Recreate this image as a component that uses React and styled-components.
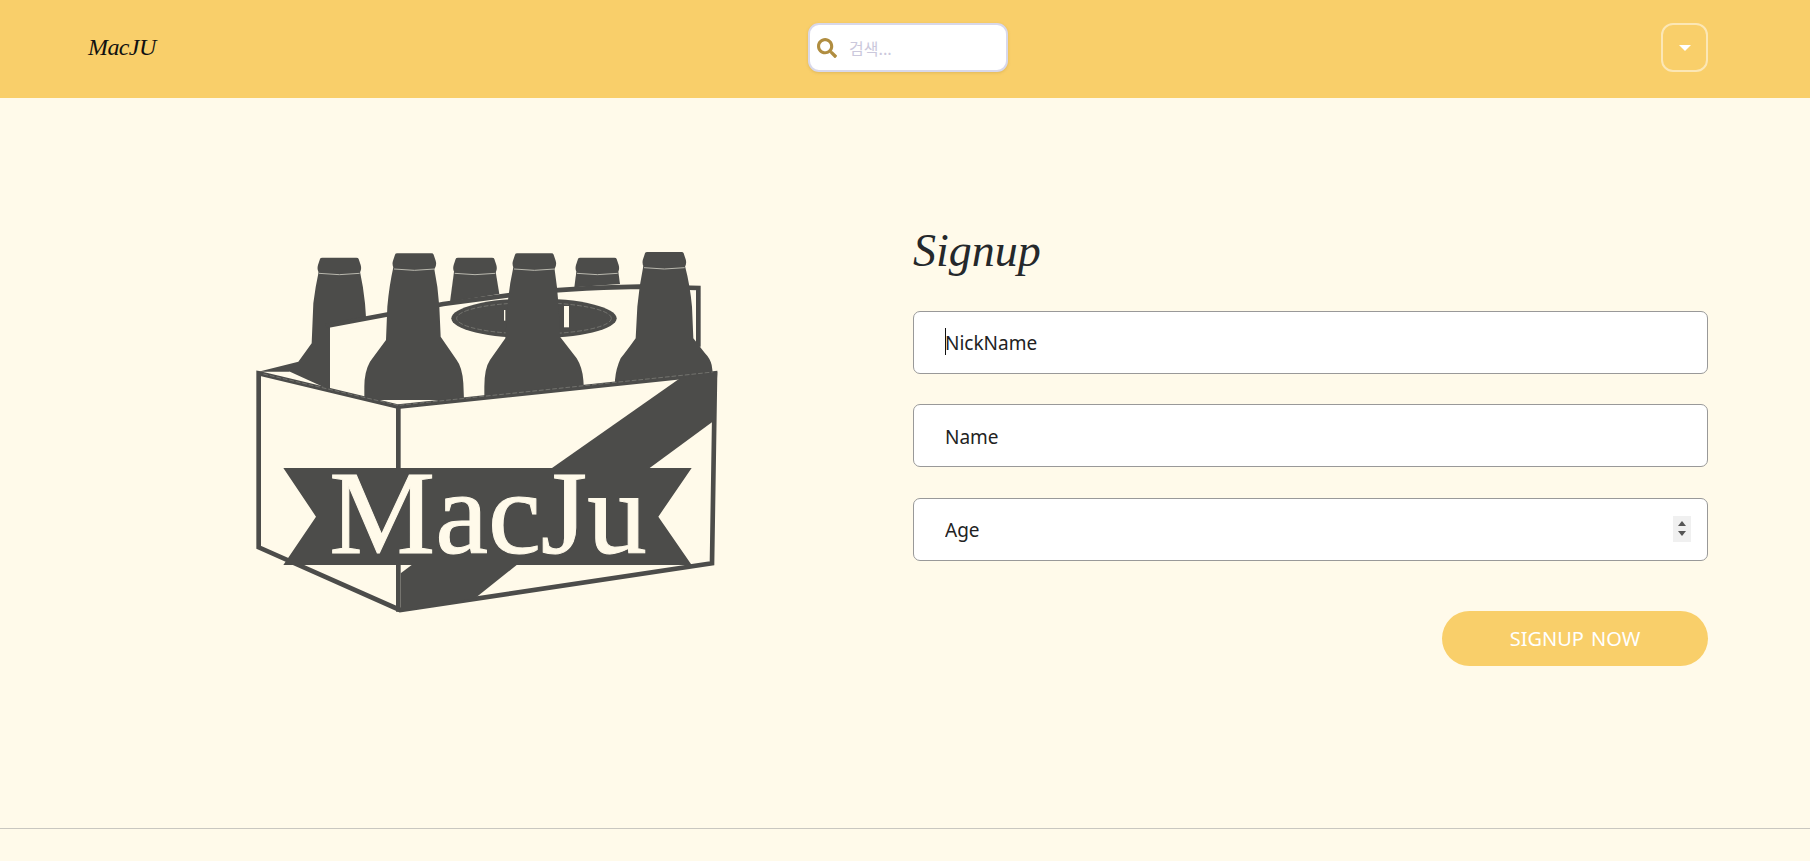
import React from 'react';
import styled, { createGlobalStyle } from 'styled-components';
import { FaSearch } from 'react-icons/fa';

const GlobalStyle = createGlobalStyle`
  html, body {
    margin: 0;
    height: 100%;
    background: #fffaea;
    overflow: hidden;
  }
  * {
    box-sizing: border-box;
  }
`;

const Page = styled.div`
  width: 1810px;
  height: 861px;
  display: flex;
  flex-direction: column;
  background: #fffaea;
  font-family: "Noto Sans", "Noto Sans CJK KR", sans-serif;
`;

const Navbar = styled.header`
  height: 98px;
  flex: none;
  display: grid;
  grid-template-columns: 720px 200px 1fr;
  align-items: center;
  padding: 0 102px 3px 88px;
  background: #f9cf6a;
`;

const Brand = styled.a`
  font-family: "Liberation Serif", serif;
  font-style: italic;
  font-size: 24px;
  letter-spacing: -0.6px;
  color: #111;
`;

const SearchBox = styled.label`
  height: 49px;
  display: flex;
  align-items: center;
  gap: 12px;
  padding-left: 7px;
  background: #fff;
  border: 2px solid #d8d8ea;
  border-radius: 11px;
  box-shadow: 0 1px 3px rgba(150, 120, 50, 0.25);
`;

const SearchIcon = styled(FaSearch)`
  width: 20px;
  height: 20px;
  flex: none;
  color: #b08d40;
`;

const SearchInput = styled.input`
  width: 130px;
  border: 0;
  outline: 0;
  padding: 0;
  background: transparent;
  font: 16px "Noto Sans CJK KR", "Noto Sans", sans-serif;

  &::placeholder {
    color: #cbc8dc;
    opacity: 1;
  }
`;

const MenuButton = styled.button`
  justify-self: end;
  width: 47px;
  height: 49px;
  display: flex;
  align-items: center;
  justify-content: center;
  padding: 0;
  background: transparent;
  border: 2px solid rgba(255, 255, 255, 0.5);
  border-radius: 12px;
`;

const MenuCaret = styled.span`
  width: 0;
  height: 0;
  border-left: 6px solid transparent;
  border-right: 6px solid transparent;
  border-top: 6px solid #fff;
`;

const Main = styled.main`
  flex: 1;
  display: grid;
  grid-template-columns: 774px 1fr;
  column-gap: 36px;
  padding: 0 102px 0 103px;
`;

const LogoColumn = styled.div`
  display: flex;
  justify-content: center;
  padding-top: 132px;
`;

const FormColumn = styled.form`
  display: flex;
  flex-direction: column;
  padding-top: 120px;
`;

const Title = styled.h1`
  margin: 0 0 27.7px;
  height: 65px;
  line-height: 65px;
  font-family: "Liberation Serif", serif;
  font-style: italic;
  font-weight: 400;
  font-size: 46px;
  color: #25282b;
`;

const Field = styled.div`
  position: relative;
  height: 63px;
  margin-bottom: 30.5px;
`;

const TextInput = styled.input`
  width: 100%;
  height: 100%;
  padding: 2px 31px 0;
  background: #fff;
  border: 1px solid #999;
  border-radius: 7px;
  outline: 0;
  font: 19px "Noto Sans", sans-serif;
  color: #222;

  &::placeholder {
    color: #222;
    opacity: 1;
  }
`;

const Caret = styled.span`
  position: absolute;
  left: 32px;
  top: 17px;
  width: 1px;
  height: 27px;
  background: #111;
`;

const Spinner = styled.span`
  position: absolute;
  right: 17px;
  top: 18px;
  width: 18px;
  height: 26px;
  display: flex;
  flex-direction: column;
  align-items: center;
  justify-content: center;
  gap: 5px;
  background: #f0f0f0;
`;

const SpinArrow = styled.span`
  width: 0;
  height: 0;
  border-left: 4px solid transparent;
  border-right: 4px solid transparent;
  border-${(p) => (p.$down ? 'top' : 'bottom')}: 5px solid #555;
`;

const Actions = styled.div`
  display: flex;
  justify-content: flex-end;
  margin-top: 20px;
`;

const SubmitButton = styled.button`
  width: 266px;
  height: 55px;
  border: 0;
  border-radius: 28px;
  background: #f9cf6a;
  color: #fff;
  font: 20px "Noto Sans", sans-serif;
  word-spacing: 2px;
`;

const Footer = styled.footer`
  height: 33px;
  flex: none;
  border-top: 1px solid #c9c7c0;
`;

const INK = '#4c4c4a';
const CREAM = '#fffaea';
const DASH = '#85857f';

const caps = [
  [263, 83],
  [670, 83],
  [1037, 83],
  [488, 70],
  [848, 70],
  [1238, 66],
];

const BottleCap = ({ x, y }) => (
  <g transform={`translate(${x} ${y})`}>
    <path
      fill={INK}
      d="M4 46 Q-3 35 1 22 L7 4 Q8 0 14 0 L116 0 Q122 0 123 4 L129 22 Q133 35 126 46 Q65 54 4 46 Z"
    />
    <path fill="none" stroke="#b9b8ae" strokeWidth="3" d="M4 47 Q65 55 126 47" />
  </g>
);

const BeerCrateLogo = () => (
  <svg width="520" height="400" viewBox="0 0 1560 1200">
    {/* bottles standing behind the carrier panel */}
    <path
      fill={INK}
      d="M266 125 Q256 170 250 220 L245 340 L205 395 L85 425 L180 425 L300 480 L300 290 L408 262 L405 220 Q400 170 390 125 Z"
    />
    <path fill={INK} d="M672 125 L660 215 L808 192 L797 125 Z" />
    <path fill={INK} d="M1039 125 L1033 172 L1170 162 L1165 125 Z" />
    <path fill={CREAM} d="M150 432 L180 425 L178 437 Z" />

    {/* carrier panel and handle */}
    <path
      fill="none"
      stroke={INK}
      strokeWidth="14"
      d="M288 288 L640 222 L850 194 Q1000 174 1230 170 L1405 174 L1405 350"
    />
    <ellipse cx="912" cy="265" rx="248" ry="60" fill={INK} />
    <ellipse cx="912" cy="265" rx="232" ry="47" fill="none" stroke={DASH} strokeWidth="2" strokeDasharray="14 6" />
    <rect x="1002" y="228" width="15" height="64" fill={CREAM} />
    <rect x="822" y="240" width="4" height="32" fill={CREAM} />

    {/* front bottles */}
    <path
      fill={INK}
      d="M490 112 Q478 165 472 230 L468 330 Q440 368 420 395 Q403 425 403 470 L403 510 L702 510 L700 460 Q697 412 680 390 L632 320 L628 230 Q624 170 612 112 Z"
    />
    <path
      fill={INK}
      d="M850 112 Q838 165 832 230 L826 325 Q800 362 780 390 Q763 415 763 470 L763 510 L1062 480 L1060 450 Q1057 412 1040 385 L990 320 L986 230 Q982 170 973 112 Z"
    />
    <path
      fill={INK}
      d="M1240 108 Q1228 165 1222 230 L1217 325 Q1192 360 1172 385 Q1158 415 1155 450 L1155 470 L1450 440 L1445 405 Q1440 385 1425 370 L1390 325 L1386 230 Q1380 165 1365 108 Z"
    />
    {caps.map(([x, y]) => (
      <BottleCap key={x} x={x} y={y} />
    ))}

    {/* crate */}
    <path
      fill={CREAM}
      stroke={INK}
      strokeWidth="14"
      strokeLinejoin="miter"
      d="M86 430 L505 530 L1455 430 L1446 1000 L510 1140 L86 952 Z"
    />
    <path fill="none" stroke={INK} strokeWidth="14" d="M505 530 L505 1145" />
    <path fill="none" stroke={DASH} strokeWidth="2" strokeDasharray="14 6" d="M100 432 L505 526 L1450 426" />

    {/* diagonal stripe */}
    <path fill={INK} d="M1350 445 L1462 425 L1455 570 L1258 715 L965 715 Z" />
    <path fill={INK} d="M512 1030 L545 1005 L860 1005 L735 1105 L512 1142 Z" />

    {/* banner */}
    <path fill={INK} d="M160 714 L1385 714 L1285 860 L1385 1005 L160 1005 L258 860 Z" />
    <text
      x="298"
      y="970"
      textLength="952"
      lengthAdjust="spacingAndGlyphs"
      fontFamily="'Liberation Serif', serif"
      fontSize="353"
      fill={CREAM}
      stroke={CREAM}
      strokeWidth="3"
    >
      MacJu
    </text>
  </svg>
);

export default function App() {
  return (
    <Page>
      <GlobalStyle />
      <Navbar>
        <Brand>MacJU</Brand>
        <SearchBox>
          <SearchIcon />
          <SearchInput placeholder="검색..." />
        </SearchBox>
        <MenuButton type="button" aria-label="menu">
          <MenuCaret />
        </MenuButton>
      </Navbar>
      <Main>
        <LogoColumn>
          <BeerCrateLogo />
        </LogoColumn>
        <FormColumn>
          <Title>Signup</Title>
          <Field>
            <TextInput placeholder="NickName" />
            <Caret />
          </Field>
          <Field>
            <TextInput placeholder="Name" />
          </Field>
          <Field>
            <TextInput placeholder="Age" />
            <Spinner>
              <SpinArrow />
              <SpinArrow $down />
            </Spinner>
          </Field>
          <Actions>
            <SubmitButton type="button">SIGNUP NOW</SubmitButton>
          </Actions>
        </FormColumn>
      </Main>
      <Footer />
    </Page>
  );
}
